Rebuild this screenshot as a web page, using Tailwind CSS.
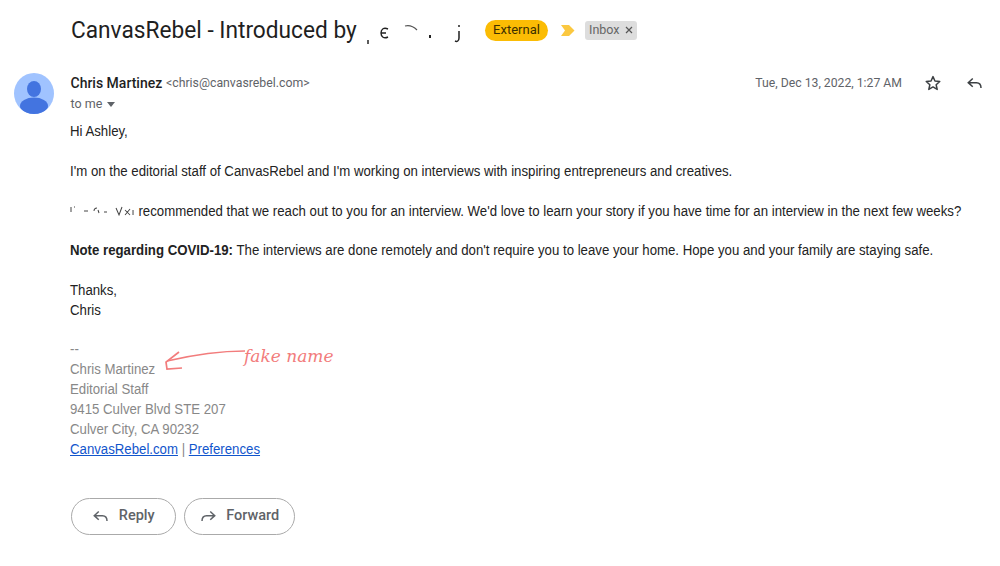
<!DOCTYPE html>
<html lang="en">
  <head>
    <meta charset="UTF-8" />
    <title>CanvasRebel - Introduced by</title>
    <script src="https://cdn.jsdelivr.net/npm/@tailwindcss/browser@4"></script>
  </head>
  <body class="bg-white w-[1000px] h-[566px] overflow-hidden font-['Roboto',sans-serif]">
    <!-- subject row -->
    <div class="flex items-center h-[30px] mt-[15px] pl-[70.500px]">
      <h1 class="text-[24px] leading-[30px] text-[#1f1f1f] w-[414.500px] shrink-0 flex items-center">
        <span class="shrink-0 whitespace-nowrap origin-left scale-x-[0.945] mr-[-20px]">CanvasRebel - Introduced by</span>
        <svg class="ml-auto mr-[19px] mt-[4px] shrink-0" width="100" height="24" viewBox="0 0 100 24" fill="none">
          <path d="M2 20v4" stroke="#333" stroke-width="1.600" />
          <path d="M22 9c-4-2-7 0-7 4s3 6 7 4M15 13h5" stroke="#222" stroke-width="1.400" />
          <path d="M39 6c4-1 8 0 12 4" stroke="#555" stroke-width="1.200" />
          <path d="M64 15v3" stroke="#222" stroke-width="2" />
          <path d="M93 5v2M93 11v7c0 3-2 4-4 3" stroke="#222" stroke-width="1.500" />
        </svg>
      </h1>
      <span class="h-[21px] w-[63px] rounded-full bg-[#fbbc04] text-[#3c3000] text-[13px] flex items-center justify-center">External</span>
      <svg class="ml-[12.500px]" width="14" height="11" viewBox="0 0 14 11"><path d="M0 0h8l5.500 5.500L8 11H0l4-5.500z" fill="#fbc840" /></svg>
      <span class="ml-[10px] h-[19px] w-[52px] rounded-[3px] bg-[#dddddd] text-[#666] text-[12.500px] flex items-center pl-[4.500px] gap-[5px]">
        Inbox
        <svg width="8" height="8" viewBox="0 0 8 8"><path d="M1 1l6 6M7 1L1 7" stroke="#555" stroke-width="1.200" /></svg>
      </span>
    </div>

    <!-- sender row -->
    <div class="flex mt-[28px] pl-[14px] pr-[16px]">
      <svg class="shrink-0" width="40" height="41" viewBox="0 0 40 41">
        <defs><clipPath id="avatar"><ellipse cx="20" cy="20.500" rx="20" ry="20.500" /></clipPath></defs>
        <ellipse cx="20" cy="20.500" rx="20" ry="20.500" fill="#a0c3ff" />
        <g clip-path="url(#avatar)" fill="#4374e0">
          <ellipse cx="20" cy="16" rx="7" ry="8" />
          <ellipse cx="20" cy="33" rx="14" ry="8.500" />
        </g>
      </svg>
      <div class="ml-[16.500px] flex-1">
        <div class="flex items-center h-[20px]">
          <span class="text-[14px] font-medium text-[#1f1f1f]">Chris Martinez</span>
          <span class="ml-[3.500px] text-[13px] origin-left scale-x-[0.945] text-[#5f6368]">&lt;chris@canvasrebel.com&gt;</span>
          <span class="ml-auto text-[13px] origin-right scale-x-[0.94] text-[#5f6368]">Tue, Dec 13, 2022, 1:27 AM</span>
          <svg class="ml-[22px]" width="18" height="18" viewBox="0 0 24 24" fill="none"><path d="M12 3.500l2.600 5.900 6.400.600-4.800 4.300 1.400 6.300L12 17.300l-5.600 3.300 1.400-6.300L3 10l6.400-.600z" stroke="#3c4043" stroke-width="2" stroke-linejoin="round" /></svg>
          <svg class="ml-[24px]" width="18" height="18" viewBox="0 0 24 24" fill="none"><path d="M9 6l-6 5.500L9 17M3 11.500h11c4 0 6 2.500 6 7" stroke="#3c4043" stroke-width="2" /></svg>
        </div>
        <div class="flex items-center h-[20px] mt-[1px] text-[12.500px] text-[#5f6368]">
          to me
          <span class="ml-[4.500px] mt-[1px] w-0 h-0 border-x-[4.500px] border-x-transparent border-t-[5px] border-t-[#5f6368]"></span>
        </div>
      </div>
    </div>

    <!-- message body -->
    <div class="relative mt-[7.800px] pl-[70.500px] font-['Liberation_Sans',sans-serif] text-[14px] leading-[19.850px] text-[#222222]">
      <div class="-ml-[0.5px] origin-left scale-x-[0.944]">
        <p>Hi Ashley,</p>
        <p class="mt-[20px]">I'm on the editorial staff of CanvasRebel and I'm working on interviews with inspiring entrepreneurs and creatives.</p>
        <p class="mt-[20px] flex items-center">
          <svg class="mr-[1.500px] shrink-0" width="71" height="20" viewBox="0 0 67 20" preserveAspectRatio="none" fill="none" stroke="#444" stroke-width="1">
            <path d="M1 6v5M4 6h1M14 10h4M24 10c0-2 1-3 3-3M28 9l1 3M34 11h3M46 7l3 7 3-8M55 9l5 5M60 8l-5 6M63 9v5" />
          </svg>
          <span class="whitespace-nowrap">recommended that we reach out to you for an interview. We'd love to learn your story if you have time for an interview in the next few weeks?</span>
        </p>
        <p class="mt-[19.800px] whitespace-nowrap"><b>Note regarding COVID-19:</b> The interviews are done remotely and don't require you to leave your home. Hope you and your family are staying safe.</p>
        <p class="mt-[19.800px]">Thanks,<br />Chris</p>
        <div class="mt-[19.800px] text-[#888888]">
          <p>--</p>
          <p>Chris Martinez</p>
          <p>Editorial Staff</p>
          <p>9415 Culver Blvd STE 207</p>
          <p>Culver City, CA 90232</p>
          <p><a href="#" class="text-[#1155cc] underline">CanvasRebel.com</a> | <a href="#" class="text-[#1155cc] underline">Preferences</a></p>
        </div>
      </div>

      <!-- red annotation over the signature -->
      <svg class="absolute left-[160px] top-[225px]" width="90" height="30" viewBox="0 0 90 30" fill="none" stroke="#f27c7c" stroke-width="1.700">
        <path d="M85 4c-25 0-48 3-78 10" />
        <path d="M19 5L6 15l1 7 15-1" />
      </svg>
      <span class="absolute left-[244px] top-[222px] font-['DejaVu_Serif',serif] italic text-[17px] leading-[24px] text-[#f27c7c]">fake name</span>

      <!-- reply and forward -->
      <div class="flex gap-[8px] mt-[38.700px] font-['Roboto',sans-serif] text-[14.500px] font-medium text-[#5f6368]">
        <button class="w-[105.500px] h-[36.500px] rounded-full border border-[#aaaaaa] flex items-center justify-center gap-[9px]">
          <svg width="18" height="18" viewBox="0 0 24 24" fill="none"><path d="M9 6l-6 5.500L9 17M3 11.500h11c4 0 6 2.500 6 7" stroke="#5f6368" stroke-width="2" /></svg>
          Reply
        </button>
        <button class="w-[110.500px] h-[36.500px] rounded-full border border-[#aaaaaa] flex items-center justify-center gap-[9px]">
          <svg width="18" height="18" viewBox="0 0 24 24" fill="none"><path d="M15 6l6 5.500L15 17M21 11.500H10c-4 0-6 2.500-6 7" stroke="#5f6368" stroke-width="2" /></svg>
          Forward
        </button>
      </div>
    </div>
  </body>
</html>
